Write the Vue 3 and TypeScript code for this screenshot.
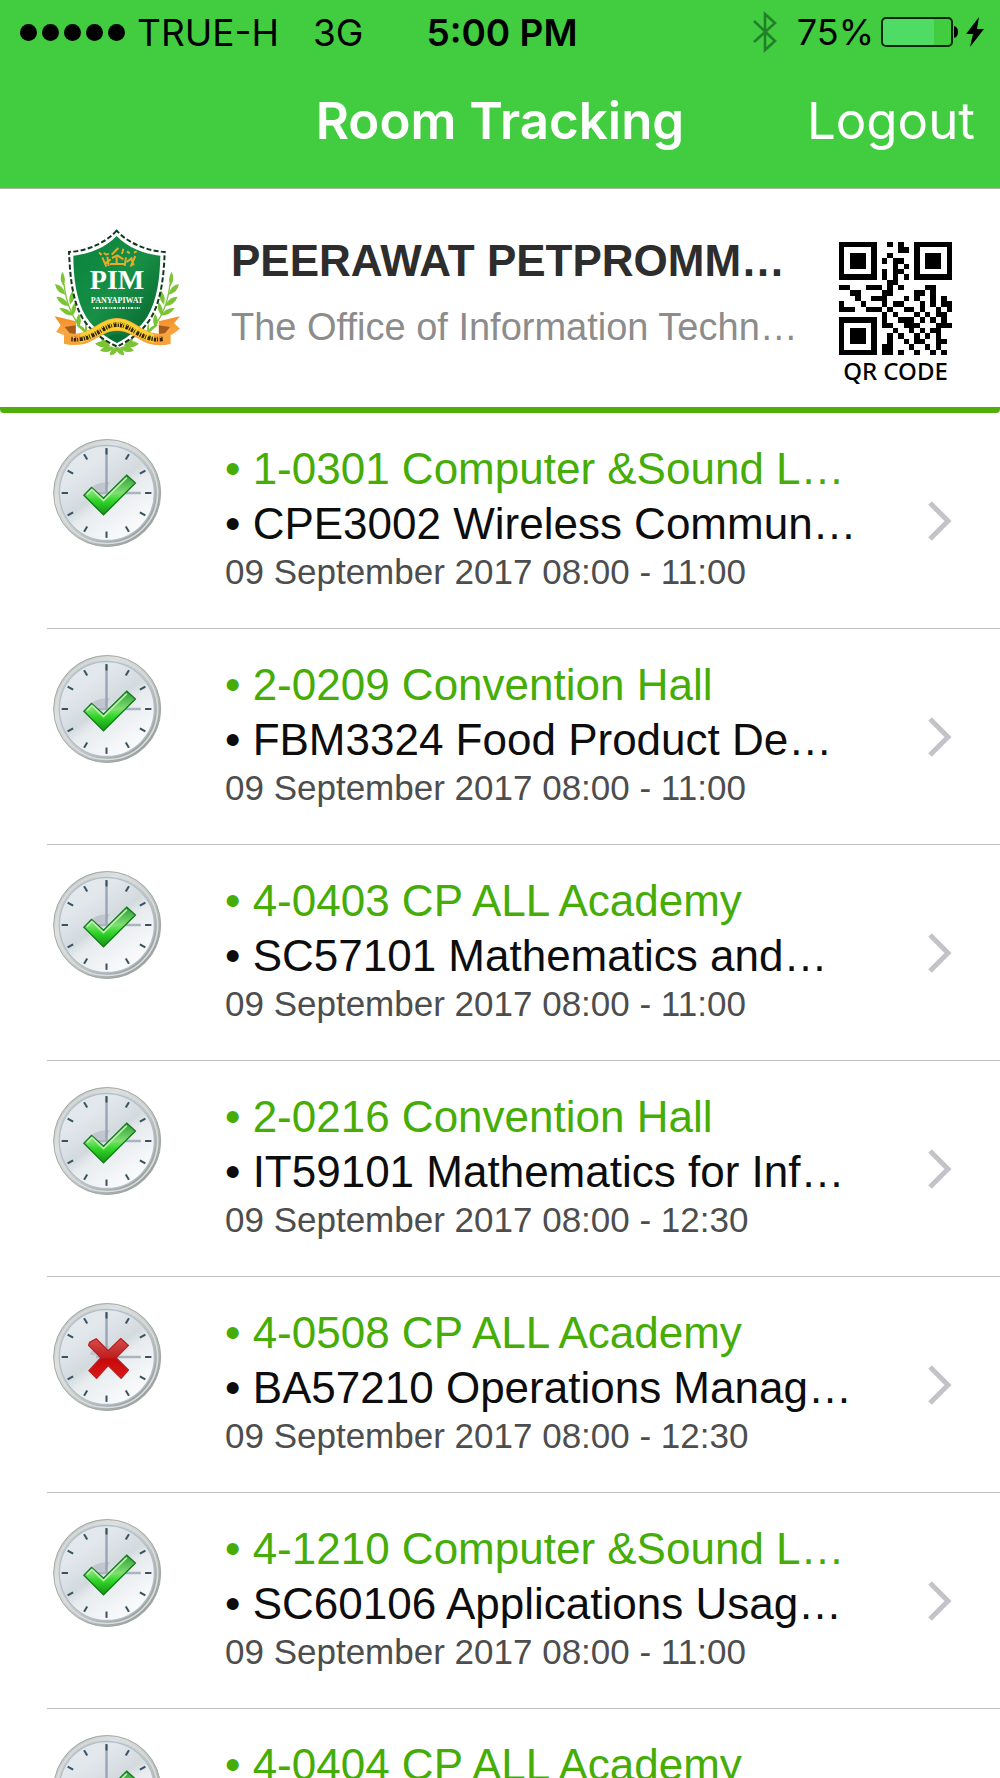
<script setup lang="ts">
interface Booking {
  room: string
  course: string
  time: string
  confirmed: boolean
}

const bookings: Booking[] = [
  { room: '1-0301 Computer &Sound L…', course: 'CPE3002 Wireless Commun…', time: '09 September 2017 08:00 - 11:00', confirmed: true },
  { room: '2-0209 Convention Hall', course: 'FBM3324 Food Product De…', time: '09 September 2017 08:00 - 11:00', confirmed: true },
  { room: '4-0403 CP ALL Academy', course: 'SC57101 Mathematics and…', time: '09 September 2017 08:00 - 11:00', confirmed: true },
  { room: '2-0216 Convention Hall', course: 'IT59101 Mathematics for Inf…', time: '09 September 2017 08:00 - 12:30', confirmed: true },
  { room: '4-0508 CP ALL Academy', course: 'BA57210 Operations Manag…', time: '09 September 2017 08:00 - 12:30', confirmed: false },
  { room: '4-1210 Computer &Sound L…', course: 'SC60106 Applications Usag…', time: '09 September 2017 08:00 - 11:00', confirmed: true },
  { room: '4-0404 CP ALL Academy', course: '', time: '', confirmed: true },
]

const ticks = Array.from({ length: 12 }, (_, i) => i * 30)

// 21 x 21 modules, one string per row
const qrRows = [
  '111111100101001111111',
  '100000100001101000001',
  '101110100100001011101',
  '101110101011001011101',
  '101110100010101011101',
  '100000101011001000001',
  '111111101010101111111',
  '000000000110000000000',
  '110001110101000011000',
  '001100001100001101000',
  '000100111000101001010',
  '100010001011000101011',
  '111001110100110100101',
  '000000001010001010110',
  '111111101001110101010',
  '100000101100111000111',
  '101110100010010101100',
  '101110100101001010100',
  '101110100100101100110',
  '100000101100010010100',
  '111111101101001001010',
]
const qrPath = qrRows
  .map((row, y) => [...row].map((c, x) => (c === '1' ? `M${x} ${y}h1v1h-1z` : '')).join(''))
  .join('')
</script>

<template>
  <div class="screen">
    <header class="top">
      <div class="status">
        <div class="group">
          <div class="signal"><i v-for="n in 5" :key="n"></i></div>
          <span class="carrier">TRUE-H</span>
          <span>3G</span>
        </div>
        <strong class="clock">5:00 PM</strong>
        <div class="group right">
          <svg class="bt" viewBox="0 0 24 42" width="24" height="42" fill="none" stroke="#23802a" stroke-width="2.6">
            <path d="M1 10L22 30L12 39V3L22 12L1 31" />
          </svg>
          <span>75%</span>
          <svg class="battery" viewBox="0 0 78 30" width="78" height="30">
            <rect x="2" y="2" width="51" height="26" rx="2" fill="#4fdc64" />
            <rect x="1" y="1" width="70" height="28" rx="4" fill="none" stroke="#062806" stroke-width="2" />
            <path d="M73 9q4 1 4 6t-4 6z" />
          </svg>
          <svg viewBox="0 0 18 30" width="18" height="30"><path d="M13 0L0 17h7L4 30L18 12h-7z" /></svg>
        </div>
      </div>
      <nav class="nav">
        <h1>Room Tracking</h1>
        <button type="button">Logout</button>
      </nav>
    </header>

    <section class="profile">
      <svg class="crest" viewBox="66 54 390 390" width="130" height="130">
        <defs>
          <linearGradient id="shield" x1="0" y1="0" x2="1" y2="1">
            <stop offset="0" stop-color="#08833f" />
            <stop offset=".5" stop-color="#178f45" />
            <stop offset="1" stop-color="#045f2c" />
          </linearGradient>
          <linearGradient id="ribbon" x1="0" y1="0" x2="0" y2="1">
            <stop offset="0" stop-color="#f28c22" />
            <stop offset="1" stop-color="#fbaa4c" />
          </linearGradient>
        </defs>
        <g fill="#7cc436">
          <g v-for="side in [1, -1]" :key="side" :transform="side === 1 ? '' : 'translate(522 0) scale(-1 1)'">
            <path d="M97 185q14 22 3 43q-14-22-3-43zM75 222q27 4 31 32q-26-4-31-32zM79 260q27 0 38 28q-27-1-38-28zM88 294q26-2 42 22q-27 2-42-22zM132 238q10 24-12 46q-8-25 12-46zM136 276q8 24-10 42q-8-22 10-42zM147 311q12 22-1 42q-16-20 1-42zM165 340q11 15 3 31l-30-26q20 0 27 14z" />
            <path d="M102 222q10 90 60 140" fill="none" stroke="#7cc436" stroke-width="4" />
            <path d="M195 401q28-18 46 6q-25 12-46-6zM210 422q16-20 42-10q-14 22-42 10zM212 385q22 2 26 22q-22-2-26-22zM240 436q-2-18 20-26l4 6q-4 18-24 20z" />
          </g>
        </g>
        <path d="M260 62C225 100 170 123 117 126C120 190 125 270 158 325C185 368 225 392 261 410C297 392 335 368 362 325C395 270 402 190 404 126C350 122 295 100 260 62z" fill="#fff" stroke="#12381f" stroke-width="6" stroke-dasharray="15 7" />
        <path d="M260 78C225 113 180 132 130 137C130 200 138 270 168 320C190 355 228 382 261 399C294 382 330 355 352 320C382 270 390 200 391 137C340 132 295 113 260 78z" fill="url(#shield)" />
        <g fill="none" stroke="#eaa92b" stroke-width="6">
          <path d="M207 127l8 8M222 128q6 10 14 2M245 134l20-20M280 116l-4 16M291 124l8 6M312 128l8-4M217 142l12 28M232 140l4 28M246 144l16-8l18 12M260 142v22M288 142l-4 26M303 142l8 24M316 138l-14 32M226 160l16-12M240 162h44M290 156l14-10" />
        </g>
        <text x="261" y="238" text-anchor="middle" class="crest-name" fill="#fff">PIM</text>
        <text x="261" y="278" text-anchor="middle" class="crest-sub" fill="#fff">PANYAPIWAT</text>
        <path d="M190 294h140" stroke="#d6eadc" stroke-width="6" stroke-dasharray="5 3 8 4 3 3" />
        <path d="M74 319l64 15v38l-40 2l-20-8l14-20zM450 319l-64 15v38l40 2l24-18l-18-16z" fill="url(#ribbon)" />
        <path d="M104 351l33-5v26l-18-2zM420 351l-33-5v26l18-2z" fill="#a45b1c" />
        <path d="M102 366q22 12 58 1C200 352 220 324 261 324S322 352 362 367q36 11 60-1v35q-28 9-66 0C315 386 300 363 261 363S207 386 166 401q-38 8-64 0z" fill="#f7a33d" />
        <path d="M150 372C200 356 220 326 261 326S322 356 372 372v27C320 384 300 361 261 361S202 384 150 399z" fill="#fbd131" />
        <path d="M124 387C195 393 215 344 261 344S327 393 398 387" fill="none" stroke="#342305" stroke-width="14" stroke-dasharray="4 3 7 3 3 5 9 3" />
        <path d="M128 382C195 384 215 339 261 339S327 384 394 382" fill="none" stroke="#fbd131" stroke-width="3" stroke-dasharray="8 5 4 3" />
        <path d="M234 382q27-20 54 0l-27 16z" fill="#067136" />
      </svg>
      <div class="person">
        <h2>PEERAWAT PETPROMM…</h2>
        <p>The Office of Information Techn…</p>
      </div>
      <a class="qr" href="#qr">
        <svg viewBox="0 0 21 21" width="113" height="113" shape-rendering="crispEdges"><path :d="qrPath" /></svg>
        <span>QR CODE</span>
      </a>
    </section>

    <ul class="list">
      <li v-for="b in bookings" :key="b.room">
        <a href="#booking">
          <svg class="dial" viewBox="70 52 328 330" width="109" height="110">
            <defs>
              <linearGradient id="rim" x1="0" y1="0" x2="1" y2="1">
                <stop offset="0" stop-color="#a9adac" />
                <stop offset=".3" stop-color="#dfe3e1" />
                <stop offset=".6" stop-color="#bcc1bf" />
                <stop offset="1" stop-color="#868c8a" />
              </linearGradient>
              <linearGradient id="face" x1="0" y1="0" x2=".7" y2="1">
                <stop offset="0" stop-color="#e6ebf1" />
                <stop offset=".3" stop-color="#e2e7ec" />
                <stop offset=".54" stop-color="#d3dade" />
                <stop offset=".64" stop-color="#e8ecef" />
                <stop offset="1" stop-color="#fbfcfc" />
              </linearGradient>
              <linearGradient id="check" x1="0" y1="0" x2="0" y2="1">
                <stop offset="0" stop-color="#2f9a35" />
                <stop offset=".45" stop-color="#7ee070" />
                <stop offset=".65" stop-color="#2fd527" />
                <stop offset="1" stop-color="#169018" />
              </linearGradient>
              <linearGradient id="cross" x1="0" y1="0" x2="0" y2="1">
                <stop offset="0" stop-color="#d94b4b" />
                <stop offset=".48" stop-color="#bd1f20" />
                <stop offset=".52" stop-color="#c80808" />
                <stop offset="1" stop-color="#db1b1b" />
              </linearGradient>
            </defs>
            <circle cx="233" cy="217" r="161" fill="url(#rim)" stroke="#a2a8a6" stroke-width="3" />
            <circle cx="233" cy="217" r="152" fill="none" stroke="#d9dedc" stroke-width="5" />
            <circle cx="232" cy="217" r="143" fill="url(#face)" stroke="#b4bfcb" stroke-width="4" />
            <path d="M180 210q10-24 60-26l-10 30z" fill="#c0c6cf" />
            <path d="M231 82V218" stroke="#98a3b6" stroke-width="7" />
            <path d="M200 217H334" stroke="#abb3be" stroke-width="7" />
            <path v-for="t in ticks" :key="t" d="M231 82v19" :transform="`rotate(${t} 231 217)`" stroke="#36535f" stroke-width="6" />
            <path v-if="b.confirmed" d="M163 224L186 200L222 233L292 163L318 187L222 283z" fill="url(#check)" stroke="#137421" stroke-width="4" />
            <path v-if="b.confirmed" d="M172 222L188 207L222 240L292 171" fill="none" stroke="#b7f0ab" stroke-width="5" />
            <path v-if="!b.confirmed" d="M180 173L200 162L236 198L274 161L297 182L260 219L297 256L275 281L236 243L201 281L178 258L214 219L177 182z" fill="url(#cross)" stroke="#b32326" stroke-width="4" stroke-linejoin="round" />
          </svg>
          <div class="details">
            <p class="room">• {{ b.room }}</p>
            <p v-if="b.course" class="course">• {{ b.course }}</p>
            <p v-if="b.time" class="time">{{ b.time }}</p>
          </div>
          <svg class="chevron" viewBox="0 0 24 42" width="24" height="42" fill="none" stroke="#c3c3c9" stroke-width="5"><path d="M2 3L20 21L2 39" /></svg>
        </a>
      </li>
    </ul>
  </div>
</template>

<style>
body {
  margin: 0;
  background: #fff;
}
</style>

<style scoped>
* {
  box-sizing: border-box;
}
.screen {
  display: flex;
  flex-direction: column;
  height: 100vh;
  overflow: hidden;
  background: #fff;
  color: #000;
  font-family: "Liberation Sans", Arial, sans-serif;
}
svg {
  display: block;
  flex: none;
}
h1, h2, p, ul {
  margin: 0;
  padding: 0;
}
.top {
  flex: none;
  height: 189px;
  background: #41cd3f;
  border-bottom: 1px solid #a9b5a9;
  font-family: Inter, sans-serif;
}
.status {
  display: grid;
  grid-template-columns: 1fr auto 1fr;
  align-items: center;
  height: 64px;
  padding: 0 16px 0 20px;
  font-size: 37px;
}
.group {
  display: flex;
  align-items: center;
}
.right {
  justify-content: flex-end;
  font-size: 36px;
}
.signal {
  display: flex;
  gap: 5px;
  margin-right: 12px;
}
.signal i {
  width: 17px;
  height: 17px;
  border-radius: 50%;
  background: #000;
}
.carrier {
  margin-right: 34px;
}
.clock {
  font-weight: 600;
}
.bt {
  margin-right: 20px;
}
.battery {
  margin: 0 7px;
}
.nav {
  display: grid;
  grid-template-columns: 1fr auto 1fr;
  align-items: center;
  height: 112px;
  padding: 0 25px;
  color: #fff;
}
.nav h1 {
  grid-column: 2;
  font-size: 51px;
  font-weight: 600;
}
.nav button {
  justify-self: end;
  padding: 0;
  border: 0;
  background: none;
  color: inherit;
  font: 400 51px Inter, sans-serif;
}
.profile {
  display: flex;
  flex: none;
  align-items: flex-start;
  height: 224px;
  padding: 39px 48px 0 52px;
  border-bottom: 6px solid #50ae0a;
  border-radius: 0 0 4px 4px;
}
.person {
  flex: 1;
  min-width: 0;
  margin-left: 49px;
  white-space: nowrap;
}
.person h2 {
  color: #2d2d2d;
  font-size: 44px;
  line-height: 66px;
}
.person p {
  color: #8c8c8c;
  font-size: 38px;
  line-height: 66px;
}
.qr {
  display: flex;
  flex-direction: column;
  align-items: center;
  margin-top: 14px;
  color: #000;
  font: 500 24px/32px "Noto Sans", sans-serif;
  text-decoration: none;
}
.crest-name {
  font: bold 84px "Liberation Serif", serif;
}
.crest-sub {
  font: bold 24px "Liberation Serif", serif;
}
.list {
  flex: 1;
  min-height: 0;
  overflow: hidden;
  list-style: none;
}
.list li {
  height: 216px;
  padding-left: 47px;
}
.list a {
  display: flex;
  height: 216px;
  padding: 25px 48px 0 6px;
  border-bottom: 1px solid #bdbdc2;
  color: inherit;
  text-decoration: none;
}
.details {
  flex: 1;
  min-width: 0;
  margin: 3px 0 0 63px;
  white-space: nowrap;
}
.room, .course {
  font-size: 44px;
  line-height: 55px;
}
.room {
  color: #45ad05;
}
.course {
  color: #0d0d0d;
}
.time {
  color: #4d4d4d;
  font-size: 35px;
  line-height: 42px;
}
.chevron {
  margin-top: 62px;
}
</style>
